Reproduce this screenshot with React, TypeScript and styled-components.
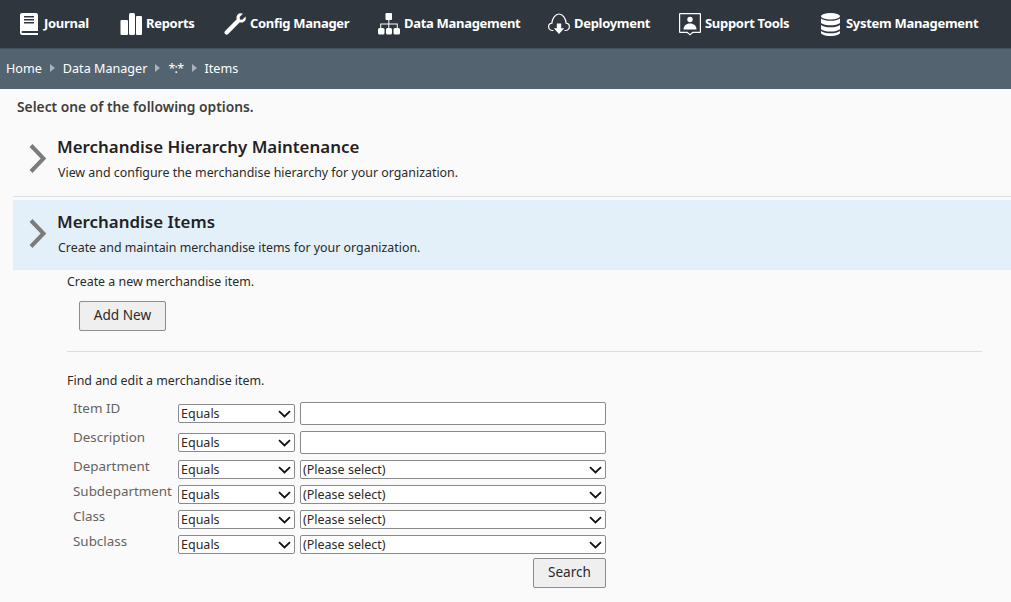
import React from "react";
import styled, { createGlobalStyle } from "styled-components";

const GlobalStyle = createGlobalStyle`
  html, body {
    margin: 0;
    padding: 0;
    background: #fafafa;
    font-family: "Noto Sans", "Open Sans", sans-serif;
    color: #2b2a28;
  }
  * { box-sizing: border-box; }
`;

const Page = styled.div`
  width: 1011px;
  height: 602px;
  overflow: hidden;
  background: #fafafa;
`;

const NavBar = styled.nav`
  display: flex;
  align-items: center;
  height: 49px;
  padding-left: 20px;
  background: #2f363e;
  border-bottom: 1px solid #465059;
`;

const NavItem = styled.a<{ $width: number }>`
  display: flex;
  align-items: center;
  gap: 4px;
  width: ${(p) => p.$width}px;
  color: #fff;
  font-size: 13px;
  font-weight: 700;
  letter-spacing: -0.3px;
  white-space: nowrap;
`;

const NavLabel = styled.span`
  padding-bottom: 2px;
`;

const NavIcon = styled.svg`
  flex: none;
  fill: #fff;
`;

const Crumbs = styled.div`
  display: flex;
  align-items: center;
  gap: 8px;
  height: 40px;
  padding: 0 0 2px 6px;
  background: #536470;
  color: #fff;
  font-size: 12.6px;
`;

const CrumbArrow = styled.span`
  width: 0;
  height: 0;
  border-left: 5px solid #a9b3ba;
  border-top: 4px solid transparent;
  border-bottom: 4px solid transparent;
`;

const WildcardCrumb = styled.span`
  letter-spacing: -0.7px;
`;

const Content = styled.main`
  padding: 9px 0 0 13px;
`;

const Prompt = styled.div`
  margin: 0 0 9px 4px;
  font-size: 13.8px;
  font-weight: 600;
  line-height: 18px;
  color: #3f3e3c;
`;

const OptionRow = styled.section<{ $active?: boolean }>`
  display: flex;
  align-items: center;
  height: 70px;
  padding-left: 16px;
  background: ${(p) => (p.$active ? "#e3f0fa" : "transparent")};
`;

const Divider = styled.hr`
  height: 1px;
  margin: 1px 0 3px;
  border: 0;
  background: #dddddd;
`;

const Chevron = styled.svg`
  flex: none;
  margin: -3px 10px 0 0;
`;

const OptionText = styled.div`
  display: flex;
  flex-direction: column;
  margin-top: -3px;
`;

const OptionTitle = styled.h2`
  margin: 0;
  font-size: 16.9px;
  font-weight: 600;
  line-height: 24px;
  color: #24221f;
`;

const OptionDesc = styled.p`
  margin: 5px 0 0 1px;
  font-size: 12.4px;
  line-height: 18px;
`;

const Detail = styled.div`
  width: 915px;
  margin-left: 54px;
  padding-top: 3px;
`;

const Note = styled.div`
  font-size: 12.4px;
  line-height: 18px;
`;

const PlainButton = styled.button`
  display: block;
  height: 30px;
  padding: 0 0 3px;
  background: #efefef;
  border: 1px solid #8c8c8c;
  border-radius: 2px;
  color: #2b2a28;
  font-family: inherit;
  font-size: 13.6px;
`;

const AddButton = styled(PlainButton)`
  width: 87px;
  margin: 10px 0 20px 12px;
`;

const SectionLine = styled.hr`
  height: 1px;
  margin: 0 0 20px;
  border: 0;
  background: #dddddd;
`;

const FormGrid = styled.div`
  display: grid;
  grid-template-columns: 100px 117px 306px;
  column-gap: 5px;
  align-items: start;
  width: 533px;
  margin: 12px 0 0 6px;
`;

const FieldLabel = styled.label<{ $tall?: boolean }>`
  height: ${(p) => (p.$tall ? 29 : 25)}px;
  color: #66635f;
  font-size: 13.4px;
  line-height: 12px;
  white-space: nowrap;
`;

const SelectWrap = styled.div<{ $tall?: boolean }>`
  position: relative;
  height: 19px;
  margin-top: ${(p) => (p.$tall ? 2 : 0)}px;
`;

const NativeSelect = styled.select`
  display: block;
  width: 100%;
  height: 19px;
  padding: 0 0 1px 2px;
  appearance: none;
  background: #fff;
  border: 1px solid #8a8a8a;
  border-radius: 2px;
  color: #2b2a28;
  font-family: inherit;
  font-size: 12.5px;
`;

const SelectArrow = styled.svg`
  position: absolute;
  top: 6px;
  right: 4px;
  pointer-events: none;
`;

const TextBox = styled.input`
  display: block;
  width: 306px;
  height: 23px;
  background: #fff;
  border: 1px solid #8a8a8a;
  border-radius: 2px;
`;

const SearchButton = styled(PlainButton)`
  width: 73px;
  grid-column: 3;
  justify-self: end;
  margin-top: -2px;
`;

function Arrow() {
  return (
    <SelectArrow width="13" height="8" viewBox="0 0 13 8">
      <path d="M1 1.2 L6.5 6.4 L12 1.2" fill="none" stroke="#111" strokeWidth="1.8" />
    </SelectArrow>
  );
}

function Op({ tall }: { tall?: boolean }) {
  return (
    <SelectWrap $tall={tall}>
      <NativeSelect defaultValue="Equals">
        <option>Equals</option>
      </NativeSelect>
      <Arrow />
    </SelectWrap>
  );
}

function PickRow({ label }: { label: string }) {
  return (
    <>
      <FieldLabel>{label}</FieldLabel>
      <Op />
      <SelectWrap>
        <NativeSelect defaultValue="(Please select)">
          <option>(Please select)</option>
        </NativeSelect>
        <Arrow />
      </SelectWrap>
    </>
  );
}

function TextRow({ label }: { label: string }) {
  return (
    <>
      <FieldLabel $tall>{label}</FieldLabel>
      <Op tall />
      <TextBox />
    </>
  );
}

const BookIcon = () => (
  <NavIcon width="20" height="22" viewBox="0 0 20 22">
    <path
      fillRule="evenodd"
      d="M2 0h14a2 2 0 0 1 2 2v16H2.500a1 1 0 0 0 0 2H18v2H2.500A2.500 2.500 0 0 1 0 19.500V2a2 2 0 0 1 2-2zM4 3v1.500h10V3zM4 6v1.500h10V6zM4 9v1.500h10V9z"
    />
  </NavIcon>
);

const BarsIcon = () => (
  <NavIcon width="22" height="22" viewBox="0 0 22 22">
    <rect x="0.500" y="7" width="7.500" height="15" rx="1" />
    <rect x="9" y="0" width="6" height="22" rx="1.500" />
    <rect x="16" y="3" width="6" height="19" rx="1" />
  </NavIcon>
);

const WrenchIcon = () => (
  <NavIcon width="22" height="22" viewBox="0 0 22 22">
    <path d="M14.600.800c2-.9 3.400-.5 4.300 0l-3.300 3.200.4 2.400 2.400.4L21.500 3.500c.6 1.800.3 3.600-1 4.800-1.400 1.400-3.200 1.600-4.700 1L4.200 21c-.8.9-2.200.9-3.100.1-.9-.9-.9-2.300 0-3.100L12.700 6.300c-.6-2.300.2-4.500 1.900-5.500z" />
  </NavIcon>
);

const SitemapIcon = () => (
  <NavIcon width="22" height="22" viewBox="0 0 22 22">
    <rect x="7.500" y="0" width="6.500" height="7" rx="1" />
    <rect x="0" y="15" width="6.500" height="6.500" rx="1.500" />
    <rect x="8" y="15" width="6" height="6.500" rx="1.500" />
    <rect x="15.500" y="15" width="6.500" height="6.500" rx="1.500" />
    <path d="M10.300 7h1v3.500h8.500V15h-1v-3.500H11.300V15h-1v-3.500H3.200V15h-1v-4.500h8.100z" />
  </NavIcon>
);

const CloudIcon = () => (
  <NavIcon width="22" height="22" viewBox="0 0 22 22">
    <path
      d="M5.500 17.500H4.500C2.300 17.500.6 15.800.6 13.800c0-1.900 1.500-3.500 3.300-3.700C4.200 5.500 7.200 1 11 1c3.800 0 6.800 4.500 7.100 9.100 1.800.2 3.300 1.800 3.300 3.700 0 2-1.700 3.700-3.900 3.700h-1"
      fill="none"
      stroke="#fff"
      strokeWidth="1.200"
    />
    <path d="M8.800 10.500h4.400v4.700h3L11 21l-5.200-5.800h3z" />
  </NavIcon>
);

const SupportIcon = () => (
  <NavIcon width="22" height="23" viewBox="0 0 22 23">
    <path
      fillRule="evenodd"
      d="M1 0h20a1 1 0 0 1 1 1v18a1 1 0 0 1-1 1h-7l-3 2.500L8 20H1a1 1 0 0 1-1-1V1a1 1 0 0 1 1-1zm.2 1.200v17.600h7.300L11 20.900l2.500-2.100h7.300V1.200z"
    />
    <circle cx="11" cy="6.500" r="2.700" />
    <path d="M4.500 16.500c0-3.700 2.700-6 6.500-6s6.500 2.300 6.500 6z" />
  </NavIcon>
);

const DatabaseIcon = () => (
  <NavIcon width="21" height="23" viewBox="0 0 21 23">
    <ellipse cx="9.500" cy="3.200" rx="9.500" ry="3.200" />
    <path d="M0 5.500c2 1.800 5.500 2.300 9.500 2.300s7.500-.5 9.500-2.300V10c-2 1.800-5.500 2.300-9.500 2.300S2 11.800 0 10z" />
    <path d="M0 12c2 1.800 5.500 2.300 9.500 2.300s7.500-.5 9.500-2.300v4.300c-2 1.800-5.500 2.300-9.500 2.300S2 18.100 0 16.300z" />
    <path d="M0 18c2 1.800 5.500 2.300 9.500 2.300s7.500-.5 9.500-2.300v1.800c0 1.800-4.200 3.200-9.500 3.200S0 21.600 0 19.800z" />
  </NavIcon>
);

const RowChevron = () => (
  <Chevron width="18" height="29" viewBox="0 0 18 29">
    <path d="M2 1.500 L14.500 14.500 L2 27.500" fill="none" stroke="#7b7b7b" strokeWidth="4" />
  </Chevron>
);

const navLinks = [
  { label: "Journal", width: 100, icon: <BookIcon /> },
  { label: "Reports", width: 104, icon: <BarsIcon /> },
  { label: "Config Manager", width: 154, icon: <WrenchIcon /> },
  { label: "Data Management", width: 170, icon: <SitemapIcon /> },
  { label: "Deployment", width: 131, icon: <CloudIcon /> },
  { label: "Support Tools", width: 142, icon: <SupportIcon /> },
  { label: "System Management", width: 160, icon: <DatabaseIcon /> },
];

export default function App() {
  return (
    <Page>
      <GlobalStyle />
      <NavBar>
        {navLinks.map((link) => (
          <NavItem key={link.label} $width={link.width}>
            {link.icon}
            <NavLabel>{link.label}</NavLabel>
          </NavItem>
        ))}
      </NavBar>
      <Crumbs>
        <span>Home</span>
        <CrumbArrow />
        <span>Data Manager</span>
        <CrumbArrow />
        <WildcardCrumb>*:*</WildcardCrumb>
        <CrumbArrow />
        <span>Items</span>
      </Crumbs>
      <Content>
        <Prompt>Select one of the following options.</Prompt>
        <OptionRow>
          <RowChevron />
          <OptionText>
            <OptionTitle>Merchandise Hierarchy Maintenance</OptionTitle>
            <OptionDesc>View and configure the merchandise hierarchy for your organization.</OptionDesc>
          </OptionText>
        </OptionRow>
        <Divider />
        <OptionRow $active>
          <RowChevron />
          <OptionText>
            <OptionTitle>Merchandise Items</OptionTitle>
            <OptionDesc>Create and maintain merchandise items for your organization.</OptionDesc>
          </OptionText>
        </OptionRow>
        <Detail>
          <Note>Create a new merchandise item.</Note>
          <AddButton>Add New</AddButton>
          <SectionLine />
          <Note>Find and edit a merchandise item.</Note>
          <FormGrid>
            <TextRow label="Item ID" />
            <TextRow label="Description" />
            <PickRow label="Department" />
            <PickRow label="Subdepartment" />
            <PickRow label="Class" />
            <PickRow label="Subclass" />
            <SearchButton>Search</SearchButton>
          </FormGrid>
        </Detail>
      </Content>
    </Page>
  );
}
